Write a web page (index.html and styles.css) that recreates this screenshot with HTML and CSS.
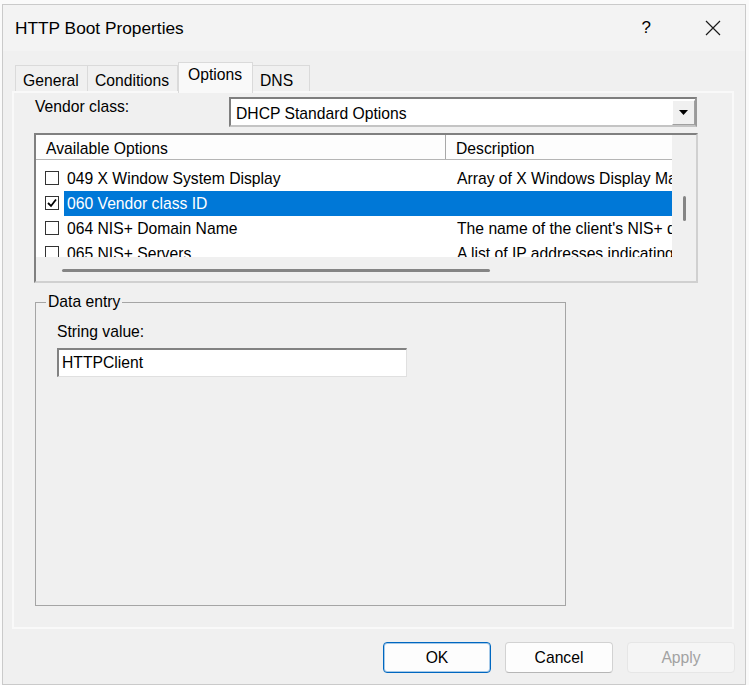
FILE: index.html
```html
<!DOCTYPE html>
<html>
<head>
<meta charset="utf-8">
<title>HTTP Boot Properties</title>
<link rel="stylesheet" href="styles.css">
</head>
<body>
<div class="window">
  <div class="titlebar">
    <span class="title">HTTP Boot Properties</span>
    <span class="help">?</span>
    <span class="close"><svg width="16" height="16" viewBox="0 0 16 16"><path d="M1 1 L15 15 M15 1 L1 15" stroke="#1a1a1a" stroke-width="1.2" fill="none"/></svg></span>
  </div>
  <div class="tabs">
    <div class="tab t-general">General</div>
    <div class="tab t-cond">Conditions</div>
    <div class="tab active t-opt">Options</div>
    <div class="tab t-dns">DNS</div>
  </div>
  <div class="panel">
    <div class="vendor-row">
      <div class="vendor-label">Vendor class:</div>
      <div class="combo">
        <span class="combo-text">DHCP Standard Options</span>
        <span class="drop"><svg width="9" height="5" viewBox="0 0 9 5"><polygon points="0,0 9,0 4.5,5" fill="#000"/></svg></span>
      </div>
    </div>
    <div class="listview">
      <div class="lv-main">
        <div class="lv-header">
          <div class="hcol1">Available Options</div>
          <div class="hcol2">Description</div>
        </div>
        <div class="lv-rows">
          <div class="row">
            <div class="cb-cell"><span class="cb"></span></div>
            <div class="rtext"><span class="rcol1">049 X Window System Display</span><span class="rcol2">Array of X Windows Display Manager servers</span></div>
          </div>
          <div class="row sel">
            <div class="cb-cell"><span class="cb"><svg width="12" height="12" viewBox="0 0 12 12"><polyline points="2,6 5,9 10,2.5" stroke="#000" stroke-width="1.8" fill="none"/></svg></span></div>
            <div class="rtext"><span class="rcol1">060 Vendor class ID</span><span class="rcol2"></span></div>
          </div>
          <div class="row">
            <div class="cb-cell"><span class="cb"></span></div>
            <div class="rtext"><span class="rcol1">064 NIS+ Domain Name</span><span class="rcol2">The name of the client's NIS+ domain.</span></div>
          </div>
          <div class="row">
            <div class="cb-cell"><span class="cb"></span></div>
            <div class="rtext"><span class="rcol1">065 NIS+ Servers</span><span class="rcol2">A list of IP addresses indicating NIS+ servers</span></div>
          </div>
        </div>
      </div>
      <div class="vscroll"><div class="vthumb"></div></div>
      <div class="hscroll"><div class="hthumb"></div></div>
      <div class="corner"></div>
    </div>
    <fieldset class="group">
      <legend>Data entry</legend>
      <div class="field-label">String value:</div>
      <div class="textbox">HTTPClient</div>
    </fieldset>
  </div>
  <div class="buttons">
    <div class="btn ok">OK</div>
    <div class="btn cancel">Cancel</div>
    <div class="btn apply">Apply</div>
  </div>
</div>
</body>
</html>
```
FILE: styles.css
```css
* { box-sizing: border-box; }
html, body { margin: 0; height: 100%; }
body {
  background: #fafafa;
  font-family: "Liberation Sans", Arial, sans-serif;
  font-size: 15.7px;
  color: #000;
  overflow: hidden;
}
.window {
  margin: 4px 0 0 2px;
  width: 744px;
  height: 681px;
  border: 1px solid #cacaca;
  background: #f0f0f0;
  display: flex;
  flex-direction: column;
}
.titlebar {
  height: 46px;
  flex: none;
  background: #f3f3f3;
  display: flex;
  align-items: center;
  padding-left: 12px;
}
.title { flex: 1; font-size: 17.3px; }
.help { font-size: 17px; margin-right: 54px; }
.close { width: 16px; height: 16px; margin-right: 24px; display: flex; }

.tabs {
  display: flex;
  align-items: flex-end;
  margin: 11px 0 0 12px;
  height: 29px;
  flex: none;
}
.tab {
  height: 26px;
  border: 1px solid #dadada;
  border-bottom: none;
  background: #f0f0f0;
  padding: 6px 0 0 7px;
  line-height: 18px;
  white-space: nowrap;
}
.t-general { width: 73px; }
.t-cond { width: 90px; border-left: none; }
.t-opt { width: 75px; }
.t-dns { width: 57px; border-left: none; }
.tab.active {
  height: 31px;
  margin-bottom: -2px;
  background: #f9f9f9;
  padding: 3px 0 0 9px;
  position: relative;
  z-index: 1;
}

.panel {
  margin-left: 9px;
  width: 722px;
  height: 538px;
  flex: none;
  border: 2px solid #f9f9f9;
  padding: 4px 0 0 20px;
}
.vendor-row { display: flex; align-items: flex-start; height: 30px; }
.vendor-label { width: 195px; padding: 1px 0 0 1px; line-height: 18px; }
.combo {
  width: 468px;
  height: 30px;
  display: flex;
  background: #fff;
  border-top: 2px solid #7f7f7f;
  border-left: 2px solid #7f7f7f;
  border-right: 2px solid #9a9a9a;
  border-bottom: 2px solid #c4c4c4;
}
.combo-text { flex: 1; padding: 2px 0 0 5px; line-height: 26px; white-space: nowrap; }
.drop {
  width: 23px;
  margin-top: 1px;
  background: #f0f0f0;
  border-top: 1px solid #fff;
  border-left: 1px solid #fff;
  border-right: 1px solid #a0a0a0;
  border-bottom: 1px solid #a0a0a0;
  display: flex;
  align-items: center;
  justify-content: center;
}

.listview {
  margin-top: 6px;
  width: 664px;
  height: 150px;
  border-top: 2px solid #808080;
  border-left: 2px solid #808080;
  border-right: 2px solid #d0d0d0;
  border-bottom: 2px solid #d0d0d0;
  display: grid;
  grid-template-columns: 636px 24px;
  grid-template-rows: 122px 24px;
  background: #f0f0f0;
}
.lv-main { background: #fff; overflow: hidden; }
.lv-header {
  display: flex;
  height: 25px;
  border-bottom: 1px solid #b5b5b5;
  line-height: 20px;
  background: #fdfdfd;
}
.hcol1 { width: 410px; padding: 4px 0 0 10px; border-right: 1px solid #a8a8a8; }
.hcol2 { padding: 4px 0 0 10px; white-space: nowrap; }
.lv-rows { padding-top: 6px; }
.row { display: flex; height: 25px; white-space: nowrap; }
.cb-cell { width: 28px; flex: none; padding: 5px 0 0 9px; }
.cb {
  display: flex;
  align-items: center;
  justify-content: center;
  width: 14px;
  height: 14px;
  border: 1px solid #333;
  background: #fff;
}
.rtext { display: flex; flex: 1; line-height: 25px; }
.rcol1 { width: 382px; flex: none; padding-left: 3px; }
.rcol2 { padding-left: 11px; }
.row.sel .rtext { background: #0078d7; color: #fff; }

.vscroll { padding: 61px 0 0 11px; }
.vthumb { width: 3px; height: 25px; background: #858585; border-radius: 2px; }
.hscroll { padding: 12px 0 0 26px; }
.hthumb { width: 428px; height: 3px; background: #858585; border-radius: 2px; }

.group {
  margin: 10px 0 0 1px;
  width: 531px;
  height: 313px;
  border: 1px solid #a5a5a5;
  padding: 0 0 0 21px;
  min-width: 0;
}
.group legend { padding: 0 2px; margin-left: -11px; line-height: 18px; }
.field-label { margin-top: 12px; line-height: 18px; }
.textbox {
  margin-top: 7px;
  width: 350px;
  height: 29px;
  background: #fff;
  border-top: 2px solid #828282;
  border-left: 2px solid #828282;
  border-right: 1px solid #e0e0e0;
  border-bottom: 1px solid #e0e0e0;
  padding-left: 3px;
  line-height: 26px;
}

.buttons {
  display: flex;
  justify-content: flex-end;
  gap: 14px;
  margin-top: 13px;
  padding-right: 10px;
}
.btn {
  width: 108px;
  height: 31px;
  border-radius: 4px;
  display: flex;
  align-items: center;
  justify-content: center;
  background: #fdfdfd;
}
.ok { border: 1px solid #0067c0; box-shadow: inset 0 0 0 1px rgba(0, 103, 192, 0.35); }
.cancel { border: 1px solid #d2d2d2; border-bottom-color: #b6b6b6; }
.apply { background: #f5f5f5; border: 1px solid #e6e6e6; color: #a2a2a2; }
```
